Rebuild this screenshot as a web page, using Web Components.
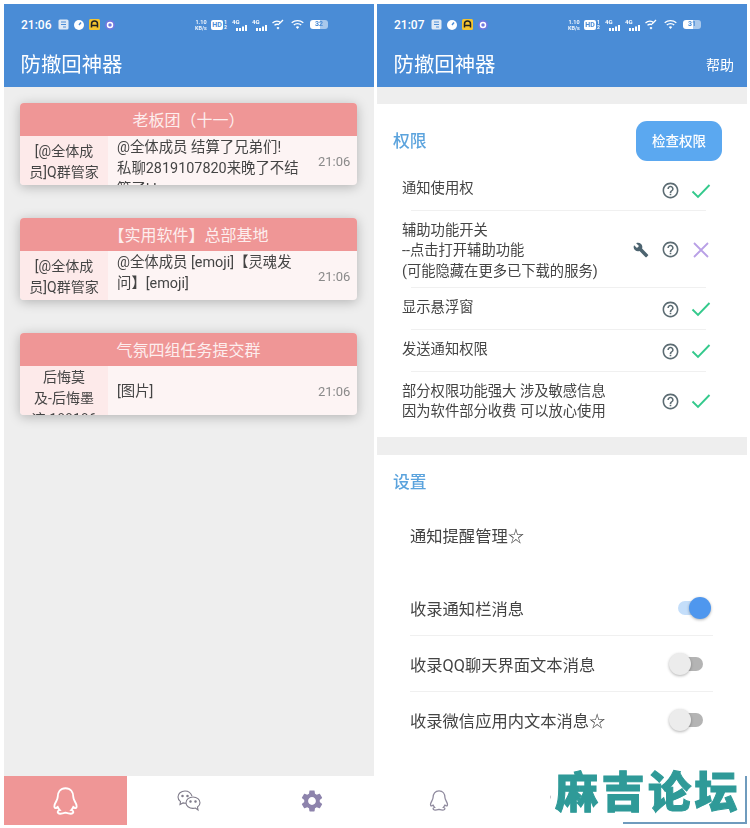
<!DOCTYPE html>
<html lang="zh"><head><meta charset="utf-8"><title>防撤回神器</title>
<style>
html,body{margin:0;padding:0;background:#fff}
body{width:750px;height:828px;overflow:hidden;font-family:Roboto,"Noto Sans CJK SC",sans-serif;color:#333}
</style></head><body>
<app-shot>
  <phone-panel time="21:06" batt="32" tab="0">
    <msg-card style="--wp:3px" title="老板团（十一）" who="[@全体成&#10;员]Q群管家" msg="@全体成员 结算了兄弟们!&#10;私聊2819107820来晚了不结算了! !" at="21:06"></msg-card>
    <msg-card style="--wp:3px" top title="【实用软件】总部基地" who="[@全体成&#10;员]Q群管家" msg="@全体成员 [emoji]【灵魂发问】[emoji]" at="21:06"></msg-card>
    <msg-card style="--wp:1px" title="气氛四组任务提交群" who="后悔莫&#10;及-后悔墨&#10;迹-188186" msg="[图片]" at="21:06"></msg-card>
  </phone-panel>
  <phone-panel time="21:07" batt="31" tab="1" action="帮助" plain>
    <settings-view></settings-view>
  </phone-panel>
</app-shot>
<script>
const I={
 help:'M11 18h2v-2h-2v2zm1-16C6.48 2 2 6.48 2 12s4.48 10 10 10 10-4.48 10-10S17.52 2 12 2zm0 18c-4.41 0-8-3.59-8-8s3.59-8 8-8 8 3.59 8 8-3.59 8-8 8zm0-14c-2.21 0-4 1.79-4 4h2c0-1.1.9-2 2-2s2 .9 2 2c0 2-3 1.75-3 5h2c0-2.25 3-2.5 3-5 0-2.21-1.79-4-4-4z',
 wrench:'M22.7 19l-9.1-9.1c.9-2.3.4-5-1.5-6.9-2-2-5-2.4-7.4-1.3L9 6 6 9 1.6 4.7C.4 7.1.9 10.1 2.9 12.1c1.9 1.9 4.6 2.4 6.9 1.5l9.1 9.1c.4.4 1 .4 1.4 0l2.3-2.3c.5-.4.5-1.1.1-1.4z',
 gear:'M19.14 12.94c.04-.3.06-.61.06-.94 0-.32-.02-.64-.07-.94l2.03-1.58c.18-.14.23-.41.12-.61l-1.92-3.32c-.12-.22-.37-.29-.59-.22l-2.39.96c-.5-.38-1.03-.7-1.62-.94l-.36-2.54c-.04-.24-.24-.41-.48-.41h-3.84c-.24 0-.43.17-.47.41l-.36 2.54c-.59.24-1.13.57-1.62.94l-2.39-.96c-.22-.08-.47 0-.59.22L2.74 8.87c-.12.21-.08.47.12.61l2.03 1.58c-.05.3-.09.63-.09.94s.02.64.07.94l-2.03 1.58c-.18.14-.23.41-.12.61l1.92 3.32c.12.22.37.29.59.22l2.39-.96c.5.38 1.03.7 1.62.94l.36 2.54c.05.24.24.41.48.41h3.84c.24 0 .44-.17.47-.41l.36-2.54c.59-.24 1.13-.56 1.62-.94l2.39.96c.22.08.47 0 .59-.22l1.92-3.32c.12-.22.07-.47-.12-.61l-2.01-1.58zM12 15.6c-1.98 0-3.6-1.62-3.6-3.6s1.62-3.6 3.6-3.6 3.6 1.62 3.6 3.6-1.62 3.6-3.6 3.6z',
 qq:'M12 1C7 1 4.500 5 4.500 9.500 4.500 12 2.500 14 1.500 17 1 19 1.500 20.500 3 20L4.500 19C5 20 5.500 21 6.500 22 4 22.500 3.500 25 7 25.500 9 25.500 10.500 25 12 24.500 13.500 25 15 25.500 17 25.500 20.500 25 20 22.500 17.500 22 18.500 21 19 20 19.500 19L21 20C22.500 20.500 23 19 22.500 17 21.500 14 19.500 12 19.500 9.500 19.500 5 17 1 12 1Z'
};
const svg=(d,s,c,extra='')=>`<svg width="${s}" height="${s}" viewBox="0 0 24 24" ${extra}><path fill="${c}" d="${d}"/></svg>`;
const def=(name,css,html)=>customElements.define(name,class extends HTMLElement{
  constructor(){super();this.attachShadow({mode:'open'})}
  connectedCallback(){const a=n=>this.getAttribute(n);this.shadowRoot.innerHTML=`<style>${css}</style>`+html(a,this)}
});

def('app-shot',`:host{display:grid;grid-template-columns:370px 370px;column-gap:3px;padding:4px 3px 3px 4px;height:821px;position:relative;box-sizing:content-box;filter:blur(.3px)}
.wm{position:absolute;right:0;bottom:0;width:199px;height:62px;background:#fff}
.txt{position:absolute;left:4px;top:-8px;font:900 43px/62px "Noto Sans CJK SC",sans-serif;-webkit-text-stroke:1px #2f9a98;color:#2f9a98;letter-spacing:3.500px;white-space:nowrap}
.ln{position:absolute;right:3px;bottom:4px;width:124px;height:48px;border-right:2px solid #6f9bbd;border-bottom:2px solid #6f9bbd;box-sizing:border-box}`,
()=>`<slot></slot><div class="wm"><div class="ln"></div><div class="txt">麻吉论坛</div></div>`);

def('status-bar',`:host{display:flex;align-items:center;height:36px;padding:5px 0 0 17px;box-sizing:border-box;color:#fff;font:500 12px Roboto,sans-serif}
.t{margin-right:7px;width:30px}.l{display:flex;align-items:center;gap:5px}.r{display:flex;align-items:center;margin-left:auto;margin-right:46px;gap:4px}
svg{display:block}.sp{font:700 5.500px/6px Roboto,sans-serif;text-align:center;width:12px;opacity:.9}
.hd{font:700 7px/10px Roboto,sans-serif;background:#fff;color:#4a8cd6;border-radius:2px;width:12px;text-align:center;height:10px}
.n{font:700 5px/5px Roboto,sans-serif;margin-left:-3px;width:4px}
.g{position:relative;width:16px;height:12px}.g b{position:absolute;left:0;top:0;font:700 6px/6px Roboto,sans-serif}
.g svg{position:absolute;left:4px;bottom:0}
.bt{font:700 7px/9px Roboto,sans-serif;width:18px;height:9px;background:linear-gradient(90deg,#fff 58%,#a8c8ec 58%);border-radius:3px;color:#4a8cd6;text-align:center}`,
a=>{const bars=`<svg width="12" height="6" viewBox="0 0 12 6"><path fill="#fff" d="M0 3h2v3H0zM3 3h2v3H3zM6 1.500h2V6H6zM9 0h2v6H9z"/></svg>`;
return `<span class="t">${a('time')}</span><div class="l">
<svg width="11" height="11" viewBox="0 0 11 11"><rect x=".5" y=".5" width="10" height="10" rx="1.500" fill="#dfe9f5"/><path d="M3 3h5M3 5.500h5M5 8h3" stroke="#4a8cd6"/></svg>
<svg width="10" height="10" viewBox="0 0 10 10"><circle cx="5" cy="5" r="5" fill="#fff"/><path d="M5 5l2-2.500" stroke="#4a8cd6" stroke-width="1.400"/></svg>
<svg width="11" height="11" viewBox="0 0 11 11"><rect width="11" height="11" rx="1.500" fill="#f4c430"/><path d="M2.500 8.500V5a3 3 0 0 1 6 0v3.500M2.500 6.500h6" stroke="#222" stroke-width="1.500" fill="none"/></svg>
<svg width="10" height="10" viewBox="0 0 10 10"><circle cx="5" cy="5" r="5" fill="#6f78e0"/><circle cx="5" cy="5" r="2.500" fill="none" stroke="#fff" stroke-width="1.500"/></svg>
</div><div class="r"><div class="sp">1.10<br>KB/s</div><div class="hd">HD</div><div class="n">1<br>2</div>
<div class="g"><b>4G</b>${bars}</div><div class="g"><b>4G</b>${bars}</div>
<svg width="12" height="11" viewBox="0 0 12 11" fill="none" stroke="#fff" stroke-width="1.300"><path d="M.5 4c2-1.800 5-2.300 7.500-1M2.500 6.200c1.300-1 3-1.200 4.500-.6M5 8.500l1 1 1-1M7 5l4-4"/></svg>
<svg width="13" height="11" viewBox="0 0 13 11" fill="none" stroke="#fff" stroke-width="1.300" style="margin-left:3px"><path d="M.7 3.800c3.300-3 8.300-3 11.600 0M2.800 6c2-1.800 5.400-1.800 7.400 0"/><path d="M4.800 8c1-.9 2.400-.9 3.400 0L6.500 10z" fill="#fff" stroke="none"/></svg>
<div class="bt" style="margin-left:2px">${a('batt')}</div></div>`});

def('phone-panel',`:host{display:flex;flex-direction:column;height:821px;background:#eee;font-family:Roboto,"Noto Sans CJK SC",sans-serif}
.bar{background:#4a8cd6;height:83px;flex:none;color:#fff}
.row{display:flex;align-items:center;justify-content:space-between;height:45px;padding:0 13px 0 16.500px;font-size:20.400px}
.act{font-size:14px;margin-top:2px}
main{flex:1;display:flex;flex-direction:column;gap:33px;padding:16px 17px 0 16px;min-height:0}
main.plain{padding:17px 0 0;gap:0}
nav{height:49px;flex:none;background:#fff;display:grid;grid-template-columns:1fr 1fr 1fr}
nav div{display:flex;align-items:center;justify-content:center}nav .on{background:#ef9696}`,
(a,el)=>{const on=+a('tab')===0;
const q=on?`<svg width="25" height="28" viewBox="0 0 24 26.500" fill="none" stroke="#fff" stroke-width="1.800"><path d="${I.qq}"/></svg>`
:`<svg width="20" height="21" viewBox="0 0 24 26.500" fill="none" stroke="#8f8a9e" stroke-width="1.600"><path d="${I.qq}"/></svg>`;
return `<div class="bar"><status-bar time="${a('time')}" batt="${a('batt')}"></status-bar><div class="row"><span>防撤回神器</span><span class="act">${a('action')||''}</span></div></div>
<main class="${el.hasAttribute('plain')?'plain':''}"><slot></slot></main>
<nav><div class="${on?'on':''}">${q}</div>
<div><svg width="24" height="22" viewBox="0 0 24 22" fill="none" stroke="#7f7b8a" stroke-width="1.100"><path d="M15 6.200C14 3 11.300 1 8 1 4 1 1 3.600 1 7c0 2 1 3.500 2.500 4.600L3 14.500l3-1.600c1 .3 2 .4 3 .3"/><path d="M16 7c-3.900 0-7 2.500-7 5.700s3.100 5.700 7 5.700c.9 0 1.700-.1 2.500-.4l2.500 2-.5-3c1.600-1 2.500-2.600 2.500-4.300C23 9.500 19.900 7 16 7z"/><circle cx="5.500" cy="6" r=".7" fill="#7f7b8a"/><circle cx="10.500" cy="6" r=".7" fill="#7f7b8a"/><circle cx="13.500" cy="11.500" r=".7" fill="#7f7b8a"/><circle cx="18.500" cy="11.500" r=".7" fill="#7f7b8a"/></svg></div>
<div>${svg(I.gear,26,'#8d83ac')}</div></nav>`});

def('msg-card',`:host{display:block;height:82px;border-radius:4px;overflow:hidden;box-shadow:0 2px 12px rgba(0,0,0,.25);flex:none;background:#fdf4f4;color:#444}
.h{height:33px;background:#ef9696;color:#fdeeee;text-align:center;font-size:16px;line-height:35px}
.b{display:grid;grid-template-columns:88px 1fr 39px;height:49px;font-size:14px;line-height:21px}
.b>div{display:flex;align-items:safe center;min-width:0;overflow:hidden;box-sizing:border-box}
.w{background:#fdeaea;text-align:center;justify-content:center;white-space:pre-line;padding-top:var(--wp,0)}
.m{padding:1px 13px 0 9px;font-size:14.400px}.m span{display:block;white-space:pre-wrap;word-break:break-all}
:host([top]) .b>.m{align-items:flex-start}
.t{color:#8a8a8a;font-size:13px;padding-top:2px}`,
a=>`<div class="h">${a('title')}</div><div class="b"><div class="w"><span>${a('who')}</span></div><div class="m"><span>${a('msg')}</span></div><div class="t">${a('at')}</div></div>`);

def('perm-row',`:host{display:flex;align-items:center;box-sizing:border-box;color:#444;font-size:14.300px;line-height:20.500px;padding:0 0 0 25px;position:relative}
:host::after{content:"";position:absolute;left:34px;width:295px;bottom:0;height:1px;background:#f0f0f0}
:host([last])::after{display:none}
.t{flex:1;white-space:pre-line;padding-bottom:var(--tp,0);padding-top:var(--tt,0)}.i{display:flex;align-items:center;margin-right:36px;padding-top:var(--ip,0)}
.w{width:18px;display:flex;justify-content:center;margin-right:11px}.q{display:flex;margin-right:11px}.s{width:20px;display:flex}
svg{display:block}`,
a=>`<div class="t"><slot></slot></div><div class="i">${a('tool')!==null?`<span class="w">${svg(I.wrench,16,'#4d6470')}</span>`:''}<span class="q">${svg(I.help,19,'#5b6b72')}</span><span class="s">${a('state')==='no'?
`<svg width="20" height="20" viewBox="0 0 20 20"><path d="M3 3l14 14M17 3L3 17" stroke="#b9a0e6" stroke-width="1.800" fill="none"/></svg>`:
`<svg width="20" height="20" viewBox="0 0 20 20"><path d="M1.500 10.500l5.500 5.500L18.500 4" stroke="#34c98c" stroke-width="1.900" fill="none"/></svg>`}</span></div>`);

def('switch-row',`:host{display:flex;align-items:center;justify-content:space-between;height:56px;box-sizing:border-box;margin:0 34px 0 33px;font-size:16.300px;color:#444;border-bottom:1px solid #f0f0f0}
:host([last]){border-bottom:0}
.sw{position:relative;width:34px;height:22px;margin-right:10px}
.tr{position:absolute;left:3px;right:0;top:4px;height:14px;border-radius:7px;background:#b4b4b4}
.th{position:absolute;left:0;top:0;width:22px;height:22px;border-radius:50%;background:#ececec;box-shadow:0 1px 3px rgba(0,0,0,.3)}
.sw.on{margin-right:2px;width:33px}
.on .tr{background:#c4defa;left:0;right:3px}.on .th{left:auto;right:0;background:#4f97ee}`,
a=>`<span><slot></slot></span><div class="sw ${a('on')!==null?'on':''}"><div class="tr"></div><div class="th"></div></div>`);

def('settings-view',`:host{display:flex;flex-direction:column;flex:1;min-height:0;gap:0}
section{background:#fff}
.a{height:333px;display:flex;flex-direction:column;flex:none}
.top{display:flex;align-items:center;justify-content:space-between;height:74px;padding:0 25px 0 16px;box-sizing:border-box;flex:none;margin-bottom:-11px}
h2{margin:0;font-weight:500;font-size:16.800px;color:#5ba3dd}
.top h2{margin-top:-2px}
button{all:unset;width:86px;height:40px;border-radius:11px;background:#5ba8f0;color:#fff;font-size:13.500px;font-weight:500;text-align:center;line-height:40px;margin-top:-1px}
.b{margin-top:18px;flex:1;display:flex;flex-direction:column}
.b h2{padding:17px 0 0 16px;line-height:20px}
.notify{font-size:16.300px;color:#444;height:56px;line-height:56px;padding-left:33px;margin:17px 0 15px}`,
()=>`<section class="a"><div class="top"><h2>权限</h2><button>检查权限</button></div>
<perm-row style="height:44px;--tp:2px;--ip:3px">通知使用权</perm-row>
<perm-row style="height:77px;--tt:2px" tool state="no">辅助功能开关
--点击打开辅助功能
(可能隐藏在更多已下载的服务)</perm-row>
<perm-row style="height:42px;--tp:3px">显示悬浮窗</perm-row>
<perm-row style="height:42px;--tp:4px">发送通知权限</perm-row>
<perm-row style="height:65px;padding-bottom:7px" last>部分权限功能强大 涉及敏感信息
因为软件部分收费 可以放心使用</perm-row></section>
<section class="b"><h2>设置</h2><div class="notify">通知提醒管理☆</div>
<switch-row on>收录通知栏消息</switch-row><switch-row>收录QQ聊天界面文本消息</switch-row><switch-row last>收录微信应用内文本消息☆</switch-row></section>`);
</script>
</body></html>
